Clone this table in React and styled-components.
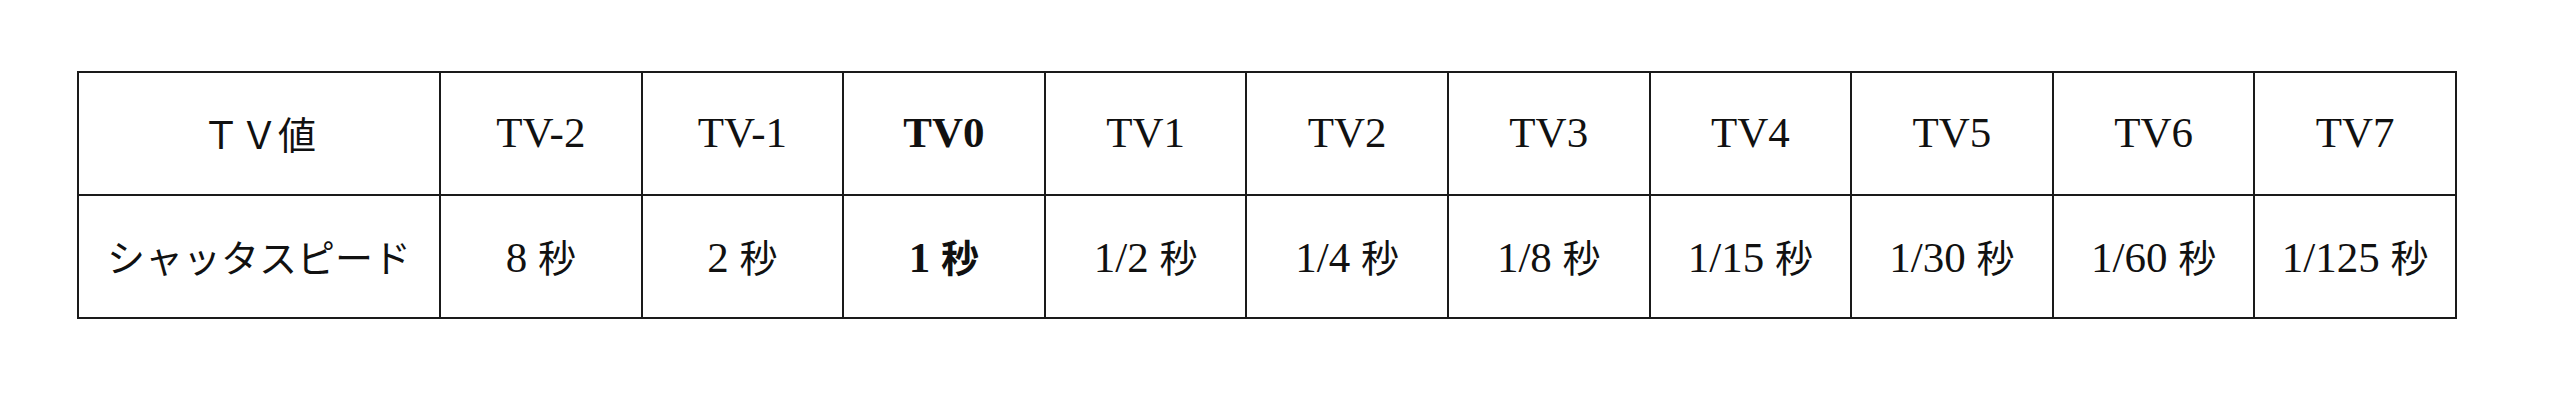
import React from 'react';
import styled, { createGlobalStyle } from 'styled-components';

const GlobalStyle = createGlobalStyle`
  html, body {
    margin: 0;
    padding: 0;
    background: #ffffff;
  }
`;

const Page = styled.div`
  padding: 71px 0 0 77px;
  height: 417px;
  box-sizing: border-box;
  background: #fff;
`;

const Table = styled.table`
  border-collapse: collapse;
  table-layout: fixed;
  width: 2378px;
  font-family: "Liberation Serif", "Noto Sans CJK JP", serif;
  font-size: 43px;
  color: #111;
`;

const Col = styled.col`
  width: ${({ $first }) => ($first ? '362px' : '201.6px')};
`;

const Row = styled.tr`
  height: 123px;
`;

const Cell = styled.td`
  border: 2px solid #1a1a1a;
  padding: 0 0 2px;
  text-align: center;
  vertical-align: middle;
  white-space: nowrap;
  font-weight: ${({ $bold }) => ($bold ? 700 : 400)};
`;

const Jp = styled.span`
  font-family: "Noto Sans CJK JP", sans-serif;
  font-size: 38px;
  font-weight: inherit;
`;

const tvValues = ['TV-2', 'TV-1', 'TV0', 'TV1', 'TV2', 'TV3', 'TV4', 'TV5', 'TV6', 'TV7'];
const speeds = ['8', '2', '1', '1/2', '1/4', '1/8', '1/15', '1/30', '1/60', '1/125'];

const App = () => {
  return (
    <>
      <GlobalStyle />
      <Page>
        <Table>
          <colgroup>
            <Col $first />
            {tvValues.map(v => (
              <Col key={v} />
            ))}
          </colgroup>
          <tbody>
            <Row>
              <Cell><Jp>ＴＶ値</Jp></Cell>
              {tvValues.map(v => (
                <Cell key={v} $bold={v === 'TV0'}>{v}</Cell>
              ))}
            </Row>
            <Row>
              <Cell><Jp>シャッタスピード</Jp></Cell>
              {speeds.map((s, i) => (
                <Cell key={s} $bold={i === 2}>
                  {s} <Jp>秒</Jp>
                </Cell>
              ))}
            </Row>
          </tbody>
        </Table>
      </Page>
    </>
  );
};

export default App;
